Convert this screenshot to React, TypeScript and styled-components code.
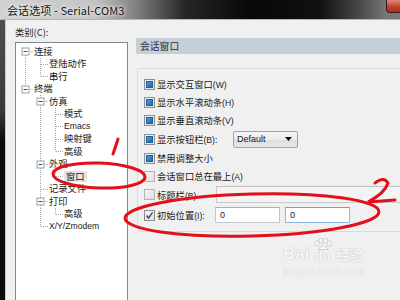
import React from 'react';
import styled, { createGlobalStyle } from 'styled-components';

const GlobalStyle = createGlobalStyle`
  html, body {
    margin: 0;
    padding: 0;
    background: #f0f0f0;
  }
  body {
    font-family: "Noto Sans CJK SC", "Noto Sans", sans-serif;
  }
`;

const CJK = `"Noto Sans CJK SC", "Noto Sans", sans-serif`;

export const Window = styled.div`
  position: relative;
  width: 400px;
  height: 300px;
  overflow: hidden;
  display: flex;
  flex-direction: column;
  background: #f0f0f0;
`;

export const TitleBar = styled.div`
  height: 19px;
  flex: none;
  display: flex;
  align-items: center;
  padding-left: 7px;
  background: linear-gradient(
    90deg,
    #d2d2d2 0,
    #c4c4c4 95px,
    #828282 135px,
    #262626 185px,
    #080808 250px,
    #101010 320px,
    #4a4a4a 360px,
    #777 386px
  );
  border-bottom: 1px solid #b4b4b4;
`;

export const Title = styled.span`
  font-family: ${CJK};
  font-size: 11px;
  color: #151515;
  text-shadow: 0 0 5px #fff, 0 0 3px #eee;
  letter-spacing: 0.1px;
`;

export const CloseButton = styled.span`
  margin-left: auto;
  margin-right: -6px;
  align-self: flex-start;
  width: 18px;
  height: 12px;
  border: 1px solid #3a1a14;
  border-top: none;
  border-radius: 0 0 0 4px;
  background: linear-gradient(180deg, #e08a78 0, #c4432f 55%, #a82d1c 100%);
`;

export const Body = styled.div`
  flex: 1;
  display: flex;
  min-height: 0;
`;

export const Frame = styled.div`
  width: 5px;
  flex: none;
  background: linear-gradient(180deg, #4e4e4e 0, #3a3a3a 90px, #0c0c0c 120px, #0a0a0a 100%);
  border-right: 1px solid #c9c9c9;
`;

export const Content = styled.div`
  flex: 1;
  display: flex;
  padding-left: 9px;
  min-width: 0;
`;

export const LeftCol = styled.div`
  width: 113px;
  flex: none;
  display: flex;
  flex-direction: column;
`;

export const Label = styled.div`
  margin-top: 5px;
  height: 14px;
  line-height: 14px;
  font-family: ${CJK};
  font-size: 9.3px;
  color: #1e1e1e;
`;

export const Latin = styled.span`
  font-family: "Liberation Sans", Arial, sans-serif;
  font-size: 8.6px;
`;

export const Tree = styled.div`
  margin-top: 3px;
  flex: 1;
  background: #fff;
  border: 1px solid #828790;
  border-bottom: none;
  padding: 2px 0 0 2px;
`;

export const TreeRow = styled.div`
  height: 12.5px;
  display: flex;
  align-items: center;
`;

export const TreeText = styled.span<{ $selected?: boolean }>`
  margin-left: 1px;
  padding: 0 ${({ $selected }) => ($selected ? '2px' : '0')};
  font-family: ${CJK};
  font-size: 9.3px;
  line-height: 11px;
  color: #1a1a1a;
  white-space: nowrap;
  background: ${({ $selected }) => ($selected ? '#e4e4e4' : 'transparent')};
`;

export const RightCol = styled.div`
  flex: 1;
  margin-left: 8px;
  margin-right: -30px;
  display: flex;
  flex-direction: column;
`;

export const Header = styled.div`
  margin-top: 18px;
  height: 16px;
  line-height: 16px;
  padding-left: 4px;
  background: #c3cfdb;
  font-family: ${CJK};
  font-size: 9.8px;
  color: #303030;
`;

export const Group = styled.div`
  margin: 14px 0 0 1px;
  height: 164px;
  box-sizing: border-box;
  border: 1px solid #d3dde4;
  border-radius: 3px;
  padding: 6px 0 0 6px;
  display: flex;
  flex-direction: column;
`;

export const Row = styled.div<{ $h: number }>`
  height: ${({ $h }) => $h}px;
  display: flex;
  align-items: center;
`;

export const Box = styled.span<{ $state: 'filled' | 'empty' | 'check' }>`
  width: 11px;
  height: 11px;
  box-sizing: border-box;
  flex: none;
  display: flex;
  align-items: center;
  justify-content: center;
  border: 1px solid ${({ $state }) => ($state === 'empty' ? '#b3b3b3' : '#8f8f8f')};
  background: ${({ $state }) =>
    $state === 'empty'
      ? 'linear-gradient(135deg, #f6f6f6 0, #dedede 100%)'
      : 'linear-gradient(135deg, #f4f4f4 0, #e2e2e2 100%)'};
`;

export const Fill = styled.span`
  width: 7px;
  height: 7px;
  box-sizing: border-box;
  border: 1px solid #1d5f98;
  background: linear-gradient(135deg, #57a6e2 0, #2a7cc6 60%, #1f69ad 100%);
`;

export const Text = styled.span<{ $w?: number }>`
  margin-left: 2px;
  width: ${({ $w }) => ($w ? `${$w}px` : 'auto')};
  flex: none;
  font-family: ${CJK};
  font-size: 9.3px;
  color: #1a1a1a;
  white-space: nowrap;
`;

export const Select = styled.div`
  width: 65px;
  height: 17px;
  box-sizing: border-box;
  border: 1px solid #a3a3a3;
  border-radius: 2px;
  background: linear-gradient(180deg, #f5f5f5 0, #ebebeb 50%, #dddddd 51%, #e6e6e6 100%);
  display: flex;
  align-items: center;
  padding: 0 5px 0 3px;
  font-family: "Liberation Sans", Arial, sans-serif;
  font-size: 9px;
  color: #1a1a1a;
  svg {
    margin-left: auto;
  }
`;

export const Field = styled.div<{ $w?: number; $h: number; $tone: 'plain' | 'focus' | 'off' }>`
  width: ${({ $w }) => ($w ? `${$w}px` : '200px')};
  height: ${({ $h }) => $h}px;
  box-sizing: border-box;
  margin-right: 5px;
  padding-left: 4px;
  display: flex;
  align-items: center;
  font-family: "Liberation Sans", Arial, sans-serif;
  font-size: 9px;
  color: #1a1a1a;
  background: ${({ $tone }) => ($tone === 'off' ? '#f4f4f4' : '#fff')};
  border: 1px solid
    ${({ $tone }) => ($tone === 'focus' ? '#8ab9e6' : $tone === 'off' ? '#cacaca' : '#c2c7cf')};
  border-top-color: ${({ $tone }) => ($tone === 'focus' ? '#6aa3d8' : $tone === 'off' ? '#c0c0c0' : '#abadb3')};
`;

export const Ink = styled.svg`
  position: absolute;
  left: 0;
  top: 0;
  pointer-events: none;
`;

export const Watermark = styled.div`
  position: absolute;
  left: 283px;
  top: 238px;
  display: flex;
  flex-direction: column;
  align-items: center;
  pointer-events: none;
  opacity: 0.9;
`;

export const Mark = styled.div`
  display: flex;
  align-items: flex-end;
  gap: 1px;
`;

export const MarkWord = styled.span<{ $cjk?: boolean; $small?: boolean }>`
  font-family: ${({ $cjk }) => ($cjk ? CJK : '"Liberation Sans", Arial, sans-serif')};
  font-weight: 700;
  font-size: ${({ $cjk, $small }) => ($cjk || $small ? '14px' : '17px')};
  line-height: ${({ $small }) => ($small ? '13px' : '18px')};
  color: #f8f8f8;
  text-shadow: 0 0 1px #b9b9b9, 0 0 1px #c9c9c9;
`;

export const Paw = styled.div`
  display: flex;
  flex-direction: column;
  align-items: center;
  margin: 0 1px;
`;

export const MarkUrl = styled.span`
  margin-top: 3px;
  font-family: "Liberation Sans", Arial, sans-serif;
  font-size: 10px;
  color: #f6f6f6;
  text-shadow: 0 0 1px #c2c2c2;
`;

const dot = { stroke: '#a3a3a3', strokeWidth: 1, strokeDasharray: '1 1' };

const Guide = ({ kind }: { kind: string }) => (
  <svg width="15" height="12.5" viewBox="0 0 15 12.5" style={{ flex: 'none' }}>
    {(kind === 'P' || kind === 'T') && <line x1="7.5" y1="0" x2="7.5" y2="12.5" {...dot} />}
    {kind === 'L' && <line x1="7.5" y1="0" x2="7.5" y2="6.5" {...dot} />}
    {(kind === 'T' || kind === 'L') && <line x1="8" y1="6.5" x2="15" y2="6.5" {...dot} />}
    {(kind === 'U' || kind === 'X') && <line x1="7.5" y1="0" x2="7.5" y2="3" {...dot} />}
    {(kind === 'D' || kind === 'X') && <line x1="7.5" y1="10" x2="7.5" y2="12.5" {...dot} />}
    {(kind === 'D' || kind === 'U' || kind === 'X') && (
      <>
        <rect x="4" y="3" width="7" height="7" fill="#fff" stroke="#97a2ad" strokeWidth="1" />
        <line x1="5.5" y1="6.5" x2="9.5" y2="6.5" stroke="#2b4d7a" strokeWidth="1" />
        <line x1="11.5" y1="6.5" x2="15" y2="6.5" {...dot} />
      </>
    )}
  </svg>
);

const tree: [string, React.ReactNode, boolean?][] = [
  ['D', '连接'],
  ['PT', '登陆动作'],
  ['PL', '串行'],
  ['U', '终端'],
  [' X', '仿真'],
  [' PT', '模式'],
  [' PT', <Latin>Emacs</Latin>],
  [' PT', '映射键'],
  [' PL', '高级'],
  [' X', '外观'],
  [' PL', '窗口', true],
  [' T', '记录文件'],
  [' X', '打印'],
  [' PL', '高级'],
  [' L', <Latin>X/Y/Zmodem</Latin>],
];

const Check = ({ state }: { state: 'filled' | 'empty' | 'check' }) => (
  <Box $state={state}>
    {state === 'filled' && <Fill />}
    {state === 'check' && (
      <svg width="9" height="9" viewBox="0 0 9 9">
        <path d="M1.5 4.5 L3.6 7 L7.6 1.4" fill="none" stroke="#3a4d6c" strokeWidth="1.4" />
      </svg>
    )}
  </Box>
);

export default function App() {
  return (
    <>
      <GlobalStyle />
      <Window>
        <TitleBar>
          <Title>会话选项 - Serial-COM3</Title>
          <CloseButton />
        </TitleBar>
        <Body>
          <Frame />
          <Content>
            <LeftCol>
              <Label>类别(C):</Label>
              <Tree>
                {tree.map(([guides, label, selected], i) => (
                  <TreeRow key={i}>
                    {guides.split('').map((g, j) => (
                      <Guide key={j} kind={g} />
                    ))}
                    <TreeText $selected={selected}>{label}</TreeText>
                  </TreeRow>
                ))}
              </Tree>
            </LeftCol>
            <RightCol>
              <Header>会话窗口</Header>
              <Group>
                <Row $h={18}>
                  <Check state="filled" />
                  <Text>显示交互窗口<Latin>(W)</Latin></Text>
                </Row>
                <Row $h={18}>
                  <Check state="filled" />
                  <Text>显示水平滚动条<Latin>(H)</Latin></Text>
                </Row>
                <Row $h={18}>
                  <Check state="filled" />
                  <Text>显示垂直滚动条<Latin>(V)</Latin></Text>
                </Row>
                <Row $h={20}>
                  <Check state="filled" />
                  <Text $w={76}>显示按钮栏<Latin>(B):</Latin></Text>
                  <Select>
                    Default
                    <svg width="7" height="4" viewBox="0 0 7 4">
                      <path d="M0 0 H7 L3.5 4 Z" fill="#111" />
                    </svg>
                  </Select>
                </Row>
                <Row $h={18}>
                  <Check state="filled" />
                  <Text>禁用调整大小</Text>
                </Row>
                <Row $h={18}>
                  <Check state="empty" />
                  <Text>会话窗口总在最上<Latin>(A)</Latin></Text>
                </Row>
                <Row $h={19}>
                  <Check state="empty" />
                  <Text $w={59}>标题栏<Latin>(B)</Latin></Text>
                  <Field $h={17} $tone="off" />
                </Row>
                <Row $h={22}>
                  <Check state="check" />
                  <Text $w={58}>初始位置<Latin>(I):</Latin></Text>
                  <Field $w={65} $h={16} $tone="plain">0</Field>
                  <Field $w={65} $h={16} $tone="focus">0</Field>
                </Row>
              </Group>
            </RightCol>
          </Content>
        </Body>

        <Watermark>
          <Mark>
            <MarkWord>Bai</MarkWord>
            <Paw>
              <svg width="22" height="12" viewBox="0 0 22 12">
                <g fill="#f8f8f8" stroke="#c4c4c4" strokeWidth="0.8">
                  <ellipse cx="5" cy="5.5" rx="2.2" ry="2.8" />
                  <ellipse cx="9" cy="2.8" rx="2.2" ry="2.6" />
                  <ellipse cx="13.5" cy="2.8" rx="2.2" ry="2.6" />
                  <ellipse cx="17.2" cy="5.5" rx="2.2" ry="2.8" />
                  <path d="M6 11.5 Q11 4 16.5 11.5 Z" />
                </g>
              </svg>
              <MarkWord $small>du</MarkWord>
            </Paw>
            <MarkWord $cjk>经验</MarkWord>
          </Mark>
          <MarkUrl>jingyan.baidu.com</MarkUrl>
        </Watermark>

        <Ink width="400" height="300" viewBox="0 0 400 300">
          <g fill="none" stroke="#e3101a" strokeWidth="3" strokeLinecap="round">
            <path d="M118 139 Q115.5 147 113 154" />
            <ellipse cx="99" cy="175.5" rx="46" ry="12.5" transform="rotate(2 99 175.5)" />
            <ellipse cx="252" cy="215" rx="127" ry="21" transform="rotate(-1.5 252 215)" />
            <path d="M375 183 Q384 176 388 183 Q385 193 368 202 L395 200" />
          </g>
        </Ink>
      </Window>
    </>
  );
}
